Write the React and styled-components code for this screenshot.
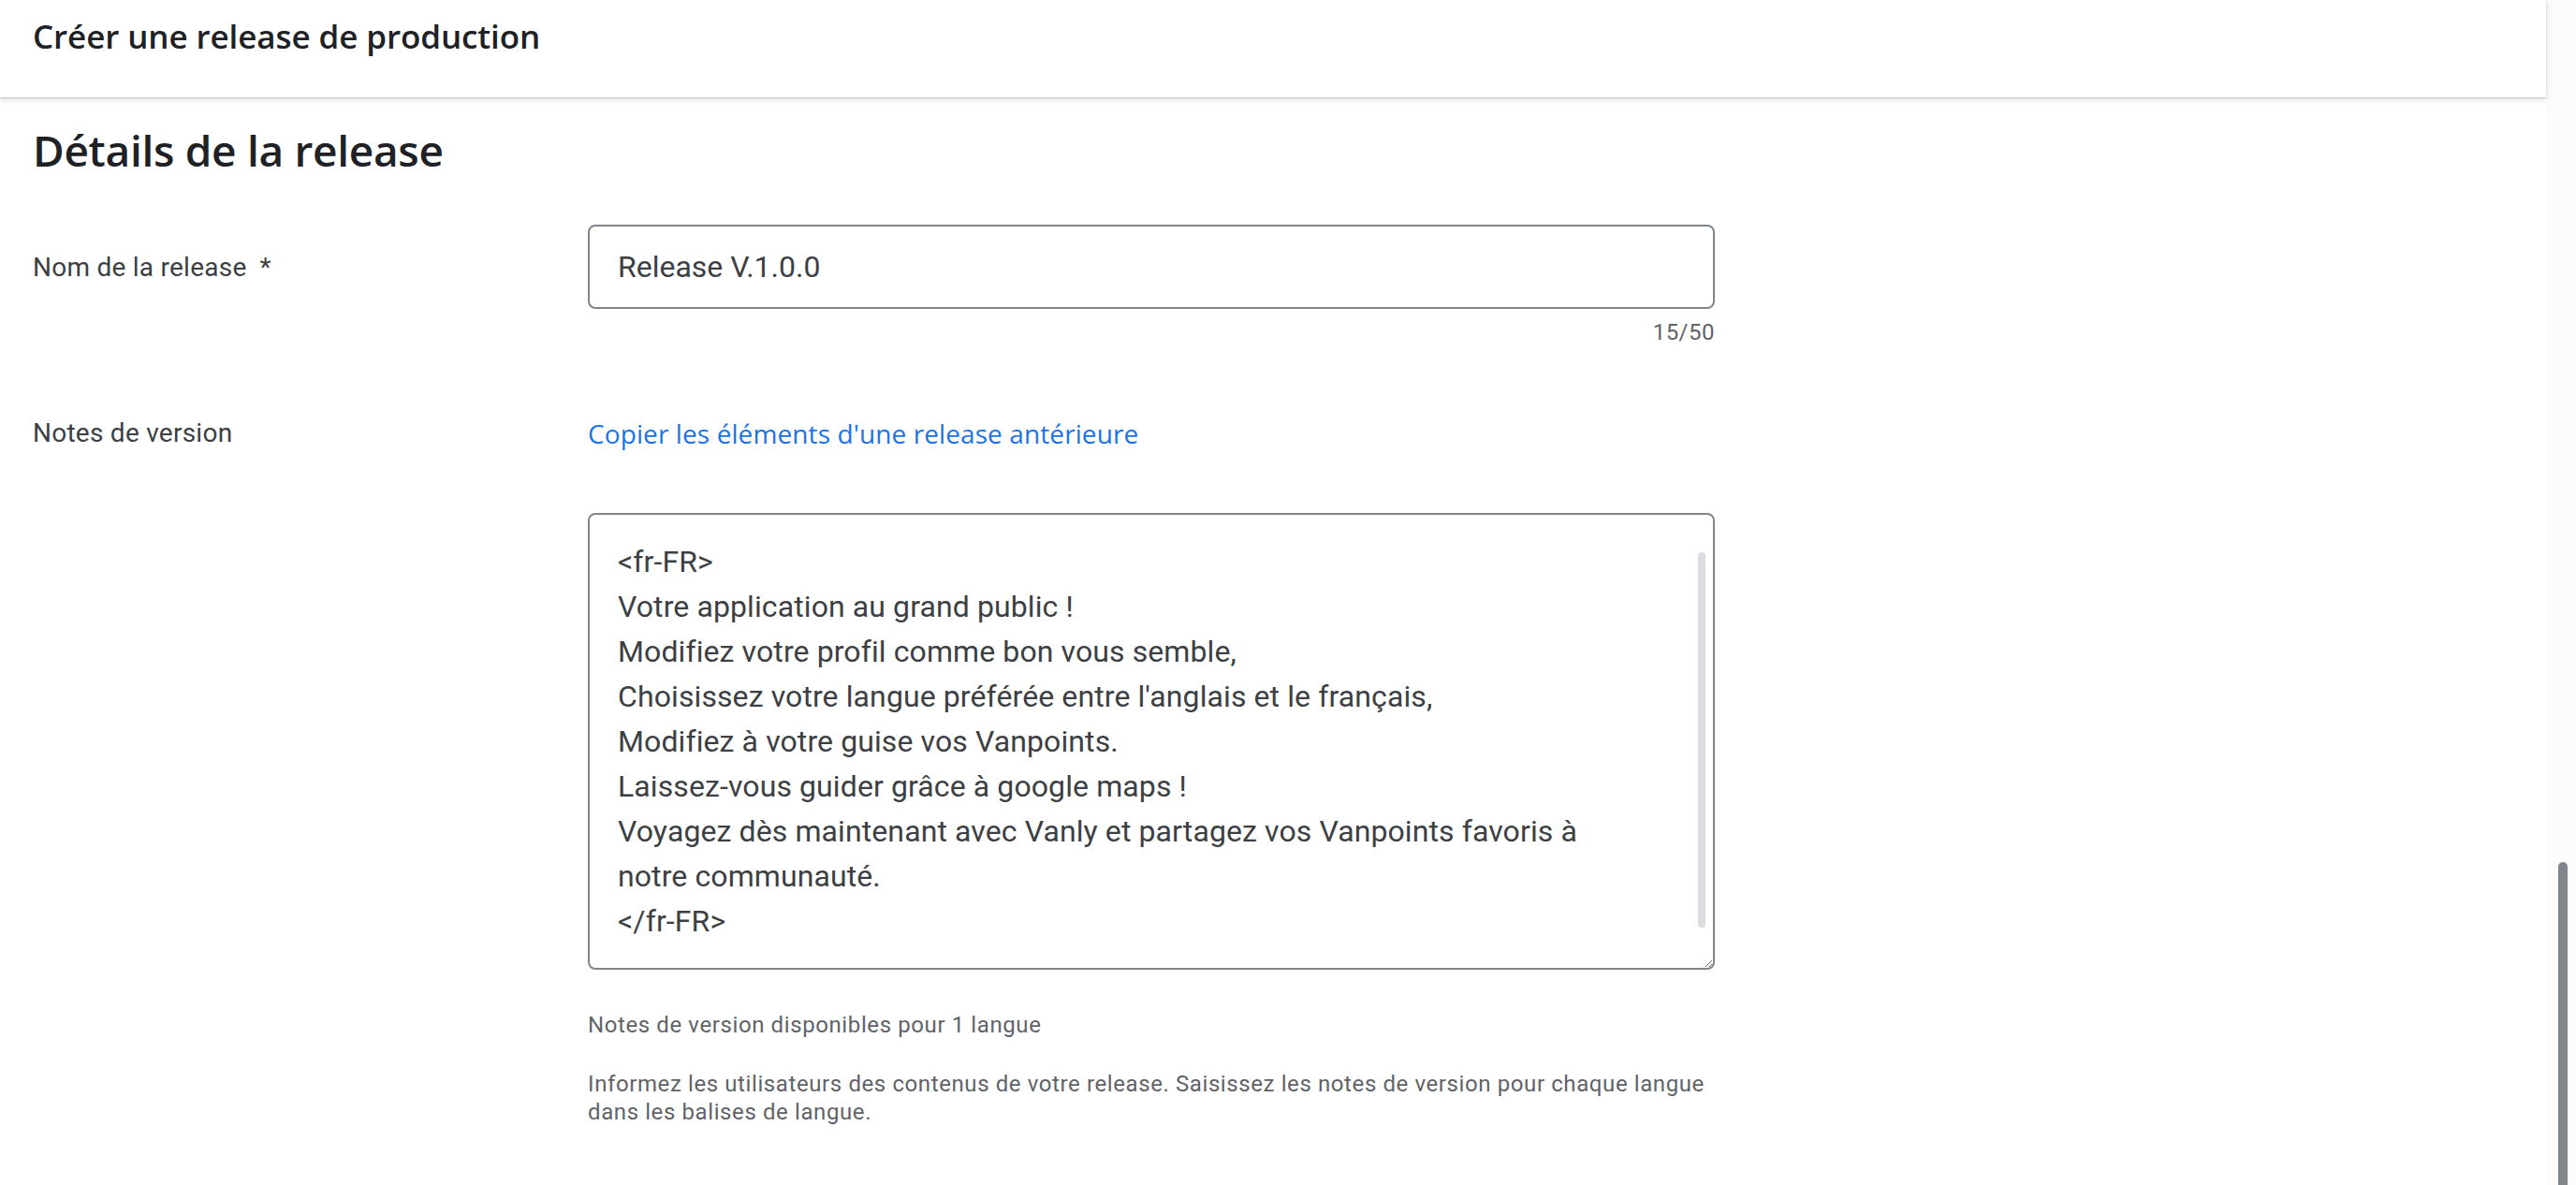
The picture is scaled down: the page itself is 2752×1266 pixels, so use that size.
import React from "react";
import styled, { createGlobalStyle } from "styled-components";

const Global = createGlobalStyle`
  html, body { margin: 0; padding: 0; background: #ffffff; }
  body { font-family: Roboto, "Liberation Sans", Arial, sans-serif; overflow: hidden; }
  * { box-sizing: border-box; }
`;

const Shell = styled.div`
  display: flex;
  width: 100vw;
  height: 100vh;
  overflow: hidden;
`;

const Main = styled.main`
  flex: 1;
  display: flex;
  flex-direction: column;
  min-width: 0;
`;

const PageScroll = styled.div`
  width: 32px;
  background: #fcfcfc;
  display: flex;
  flex-direction: column;
  justify-content: flex-end;
  align-items: center;
  padding-left: 4px;
`;

const PageThumb = styled.div`
  width: 10px;
  height: 345px;
  background: #80868b;
  border-radius: 5px 5px 0 0;
`;

const Header = styled.header`
  height: 104px;
  padding: 15px 35px 0;
  background: #ffffff;
  box-shadow: 0 1px 2px rgba(60, 64, 67, 0.25), 0 3px 6px 1px rgba(60, 64, 67, 0.1);
  position: relative;
  z-index: 1;
`;

const Title = styled.h1`
  margin: 0;
  font-family: "Open Sans", Roboto, sans-serif;
  font-weight: 600;
  font-size: 35px;
  line-height: 48px;
  color: #202124;
  letter-spacing: -0.1px;
`;

const Content = styled.div`
  padding: 0 35px;
`;

const SectionTitle = styled.h2`
  margin: 24px 0 0;
  font-family: "Open Sans", Roboto, sans-serif;
  font-weight: 600;
  font-size: 46px;
  line-height: 64px;
  color: #202124;
  letter-spacing: -0.3px;
`;

const FormRow = styled.div`
  display: grid;
  grid-template-columns: 593px 1204px;
  margin-top: ${(p) => p.$gap}px;
`;

const Label = styled.div`
  font-size: 28px;
  line-height: 48px;
  color: #3c4043;
  padding-top: ${(p) => p.$offset || 0}px;
  letter-spacing: 0.25px;
`;

const Required = styled.span`
  margin-left: 14px;
`;

const Field = styled.div`
  display: flex;
  flex-direction: column;
`;

const TextInput = styled.input`
  height: 90px;
  width: 100%;
  border: 2px solid #80868b;
  border-radius: 8px;
  padding: 0 30px;
  font-family: Roboto, sans-serif;
  font-size: 32px;
  color: #3c4043;
  background: #fff;
  outline: none;
`;

const Counter = styled.div`
  margin-top: 9px;
  text-align: right;
  font-size: 24px;
  line-height: 32px;
  color: #5f6368;
  letter-spacing: 0.5px;
`;

const Link = styled.a`
  font-family: "Open Sans", Roboto, sans-serif;
  font-weight: 500;
  font-size: 28px;
  line-height: 48px;
  color: #1a73e8;
  text-decoration: none;
  cursor: pointer;
  align-self: flex-start;
  letter-spacing: 0.1px;
`;

const AreaWrap = styled.div`
  position: relative;
  margin-top: 61px;
`;

const Area = styled.textarea`
  display: block;
  width: 100%;
  height: 488px;
  border: 2px solid #80868b;
  border-radius: 8px;
  padding: 26px 90px 26px 30px;
  font-family: Roboto, sans-serif;
  font-size: 32px;
  line-height: 48px;
  color: #3c4043;
  background: #fff;
  resize: vertical;
  outline: none;
  overflow: hidden;
  letter-spacing: 0.1px;
`;

const AreaThumb = styled.div`
  position: absolute;
  right: 10px;
  top: 42px;
  bottom: 45px;
  width: 8px;
  border-radius: 4px;
  background: #dadce0;
  pointer-events: none;
`;

const Hint = styled.p`
  margin: ${(p) => p.$gap}px 0 0;
  font-size: 24px;
  line-height: ${(p) => p.$lh || 32}px;
  color: #5f6368;
  letter-spacing: 0.6px;
`;

const notes = `<fr-FR>
Votre application au grand public !
Modifiez votre profil comme bon vous semble,
Choisissez votre langue préférée entre l'anglais et le français,
Modifiez à votre guise vos Vanpoints.
Laissez-vous guider grâce à google maps !
Voyagez dès maintenant avec Vanly et partagez vos Vanpoints favoris à notre communauté.
</fr-FR>`;

export default function App() {
  return (
    <>
      <Global />
      <Shell>
        <Main>
          <Header>
            <Title>Créer une release de production</Title>
          </Header>
          <Content>
            <SectionTitle>Détails de la release</SectionTitle>
            <FormRow $gap={48}>
              <Label $offset={22}>
                Nom de la release<Required>*</Required>
              </Label>
              <Field>
                <TextInput defaultValue="Release V.1.0.0" />
                <Counter>15/50</Counter>
              </Field>
            </FormRow>
            <FormRow $gap={68}>
              <Label>Notes de version</Label>
              <Field>
                <Link>Copier les éléments d'une release antérieure</Link>
                <AreaWrap>
                  <Area defaultValue={notes} spellCheck={false} />
                  <AreaThumb />
                </AreaWrap>
                <Hint $gap={43}>Notes de version disponibles pour 1 langue</Hint>
                <Hint $gap={32} $lh={30}>
                  Informez les utilisateurs des contenus de votre release. Saisissez les notes de version pour chaque langue dans les balises de langue.
                </Hint>
              </Field>
            </FormRow>
          </Content>
        </Main>
        <PageScroll>
          <PageThumb />
        </PageScroll>
      </Shell>
    </>
  );
}
